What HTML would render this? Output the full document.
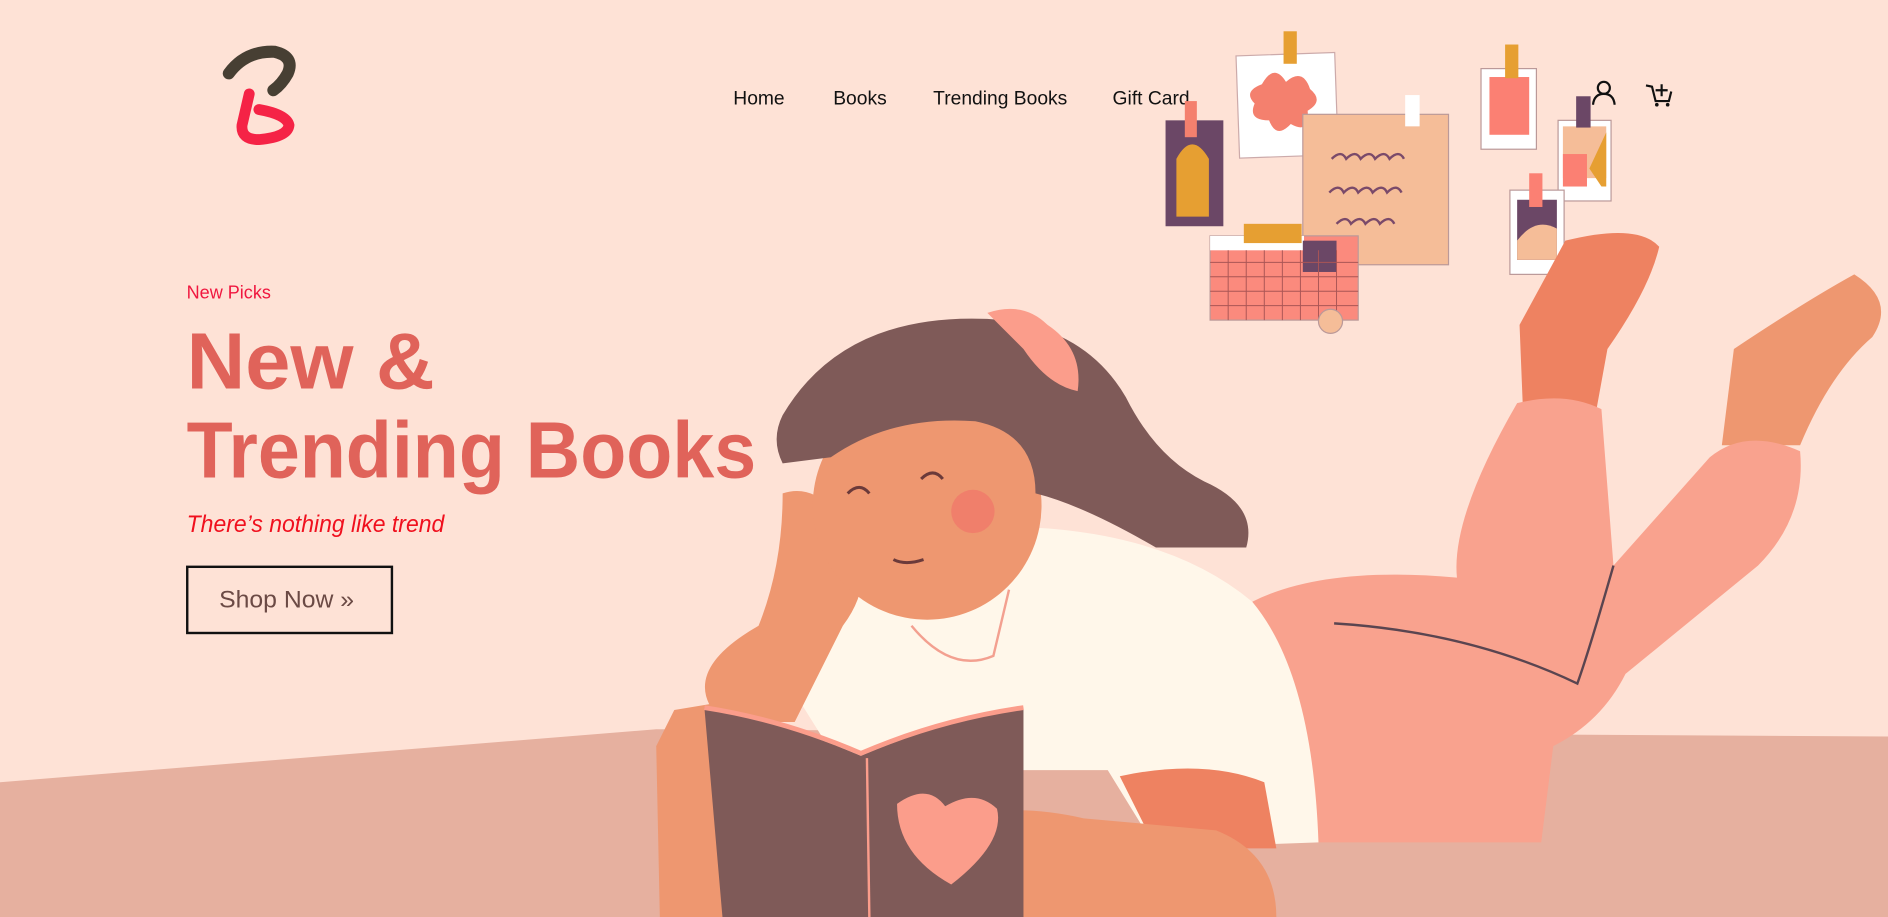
<!DOCTYPE html>
<html><head><meta charset="utf-8"><style>
html,body{margin:0;padding:0;width:1888px;height:917px;overflow:hidden;background:#fee2d6}
svg{display:block}
text{font-family:"Liberation Sans",sans-serif}
</style></head><body>
<svg width="1888" height="917" viewBox="0 0 1568 762" preserveAspectRatio="none" xmlns="http://www.w3.org/2000/svg">
<rect width="1568" height="762" fill="#fee2d6"/>
<!-- floor -->
<path d="M0 650 L545 606 L1568 612 L1568 762 L0 762Z" fill="#e6b09f"/>
<!-- logo -->
<path d="M190 61 Q204 42 228 43 Q245 47 239 61 Q234 70 227 75" fill="none" stroke="#473f33" stroke-width="10" stroke-linecap="round"/>
<path d="M207 78 L201 104 Q200 116 215 116 Q239 114 240 104 Q238 95 215 91" fill="none" stroke="#f52346" stroke-width="9" stroke-linecap="round"/>
<!-- nav -->
<g font-size="16" fill="#111">
<text x="609" y="87">Home</text>
<text x="692" y="87">Books</text>
<text x="775" y="87">Trending Books</text>
<text x="924" y="87">Gift Card</text>
</g>
<!-- icons -->
<g fill="none" stroke="#111" stroke-width="1.8">
<circle cx="1332" cy="73" r="5"/>
<path d="M1323 87 Q1324 78 1332 78 Q1340 78 1341 87"/>
<path d="M1367 71 L1372 72 L1375 84 L1386 84 L1388 76"/>
<path d="M1380 70 V80 M1375 75 H1385"/>
</g>
<circle cx="1376" cy="87" r="1.5" fill="#111"/><circle cx="1385" cy="87" r="1.5" fill="#111"/>
<!-- wall notes -->
<rect x="1028" y="45" width="82" height="85" fill="#fff" stroke="#caa" transform="rotate(-2 1069 88)"/>
<rect x="1066" y="26" width="11" height="27" fill="#e69f32"/>
<path d="M1048 70 Q1058 52 1068 68 Q1082 56 1088 74 Q1100 84 1086 92 Q1088 112 1072 103 Q1060 116 1054 100 Q1036 100 1042 86 Q1032 76 1048 70Z" fill="#f4806e"/>
<rect x="968" y="100" width="48" height="88" fill="#6b4766"/>
<path d="M977 132 Q990 108 1004 132 L1004 180 L977 180Z" fill="#e69f32"/>
<rect x="984" y="84" width="10" height="30" fill="#f4806e"/>
<rect x="1082" y="95" width="121" height="125" fill="#f5bd98" stroke="#b99"/>
<rect x="1167" y="79" width="12" height="26" fill="#fff"/>
<g fill="none" stroke="#7a4a6a" stroke-width="2"><path d="M1106 132 q8 -8 12 0 q8 -8 12 0 q8 -8 12 0 q8 -8 12 0 q8 -8 12 0"/><path d="M1104 160 q8 -8 12 0 q8 -8 12 0 q8 -8 12 0 q8 -8 12 0 q8 -8 12 0"/><path d="M1110 186 q8 -8 12 0 q8 -8 12 0 q8 -8 12 0 q8 -8 12 0"/></g>
<rect x="1005" y="196" width="123" height="70" fill="#fb8a7d" stroke="#b99"/>
<rect x="1005" y="196" width="78" height="12" fill="#fff"/>
<rect x="1033" y="186" width="48" height="16" fill="#e69f32"/>
<rect x="1082" y="200" width="28" height="26" fill="#6b4766"/>
<g stroke="#a55" stroke-width="0.8"><path d="M1005 218H1128M1005 230H1128M1005 242H1128M1005 254H1128M1020 208V266M1035 208V266M1050 208V266M1065 208V266M1080 208V266M1095 208V266M1110 208V266"/></g>
<circle cx="1105" cy="267" r="10" fill="#f5bd98" stroke="#b99"/>
<rect x="1230" y="57" width="46" height="67" fill="#fff" stroke="#b99"/>
<rect x="1237" y="64" width="33" height="48" fill="#fb8073"/>
<rect x="1250" y="37" width="11" height="28" fill="#e69f32"/>
<rect x="1294" y="100" width="44" height="67" fill="#fff" stroke="#b99"/>
<path d="M1298 105 H1334 V148 H1298Z" fill="#f5bd98"/><path d="M1334 110 L1320 140 L1330 155 L1334 155Z" fill="#e69f32"/><rect x="1298" y="128" width="20" height="27" fill="#fb8073"/>
<rect x="1309" y="80" width="12" height="26" fill="#6b4766"/>
<rect x="1254" y="158" width="45" height="70" fill="#fff" stroke="#b99"/>
<rect x="1260" y="166" width="33" height="50" fill="#6b4766"/>
<path d="M1260 216 V200 Q1275 180 1293 190 V216Z" fill="#f5bd98"/>
<rect x="1270" y="144" width="11" height="28" fill="#fb8073"/>
<!-- legs / feet -->
<path d="M1300 200 Q1360 185 1378 205 Q1370 240 1335 290 L1325 345 L1265 345 L1262 270 Z" fill="#ee8261"/>
<path d="M1540 228 Q1575 250 1555 280 Q1520 310 1495 370 L1430 370 L1440 290 Q1500 250 1540 228Z" fill="#ee9770"/>
<!-- pants -->
<path d="M1260 335 Q1300 325 1330 340 L1340 470 L1420 380 Q1450 355 1495 375 Q1500 430 1460 470 L1350 560 Q1330 600 1290 620 L1280 700 L1090 700 L1040 500 Q1100 470 1210 480 Q1205 430 1260 335Z" fill="#f9a28e"/>
<path d="M1108 518 Q1220 525 1310 568 Q1320 540 1340 470" fill="none" stroke="#5a4550" stroke-width="2"/>
<!-- shirt -->
<path d="M690 470 Q780 430 880 440 Q980 450 1040 500 Q1090 560 1095 700 L960 705 L920 640 L700 640 L650 560Z" fill="#fff7ea"/>
<path d="M757 520 Q790 560 825 545 L838 490" fill="none" stroke="#f3a090" stroke-width="2"/>
<path d="M930 645 Q1000 630 1050 650 L1060 705 L960 705Z" fill="#ee8261"/>
<!-- arms -->
<path d="M650 410 Q680 400 705 440 Q730 480 700 520 L660 600 L600 600 Q560 560 630 520 Q650 470 650 410Z" fill="#ee9770"/>
<path d="M545 620 L560 590 L590 585 L600 762 L548 762Z" fill="#ee9770"/>
<path d="M770 700 Q810 660 900 680 L1010 690 Q1060 710 1060 762 L780 762Z" fill="#ee9770"/>
<!-- head -->
<circle cx="770" cy="420" r="95" fill="#ee9770"/>
<path d="M650 345 Q700 260 820 265 Q900 270 935 330 Q960 380 1000 400 Q1045 420 1035 455 L960 455 Q900 420 860 410 Q860 360 810 350 Q740 345 690 380 L650 385 Q640 365 650 345Z" fill="#7f5a58"/>
<path d="M820 260 Q850 250 870 270 Q900 290 895 325 Q870 320 850 290Z" fill="#fb9d8b"/>
<circle cx="808" cy="425" r="18" fill="#f07f6b"/>
<g fill="none" stroke="#6b3a3a" stroke-width="2.5"><path d="M704 410 q10 -10 18 0"/><path d="M765 398 q10 -10 18 0"/><path d="M742 465 q10 5 25 0"/></g>
<!-- book -->
<path d="M585 588 Q650 600 715 628 Q780 600 850 588 L850 762 L600 762Z" fill="#7f5a58"/>
<path d="M585 588 Q650 598 715 626 Q780 598 850 588" fill="none" stroke="#fb9d8b" stroke-width="4"/>
<path d="M745 668 Q770 650 785 670 Q810 655 828 672 Q835 700 790 735 Q745 710 745 668Z" fill="#fb9d8b"/>
<path d="M720 630 L722 762" stroke="#fb9d8b" stroke-width="2"/>
<!-- text -->
<text x="155" y="248" font-size="15" fill="#f0173f">New Picks</text>
<text x="155" y="323" font-size="66" font-weight="bold" fill="#e0635a" textLength="206" lengthAdjust="spacingAndGlyphs">New &amp;</text>
<text x="155" y="397" font-size="66" font-weight="bold" fill="#e0635a" textLength="473" lengthAdjust="spacingAndGlyphs">Trending Books</text>
<text x="155" y="442" font-size="20" font-style="italic" fill="#f0101e" textLength="214" lengthAdjust="spacingAndGlyphs">There’s nothing like trend</text>
<rect x="155.5" y="471" width="170" height="55" fill="none" stroke="#111" stroke-width="2"/>
<text x="182" y="505" font-size="20" fill="#6b4a45" textLength="112" lengthAdjust="spacingAndGlyphs">Shop Now »</text>
</svg>
</body></html>
